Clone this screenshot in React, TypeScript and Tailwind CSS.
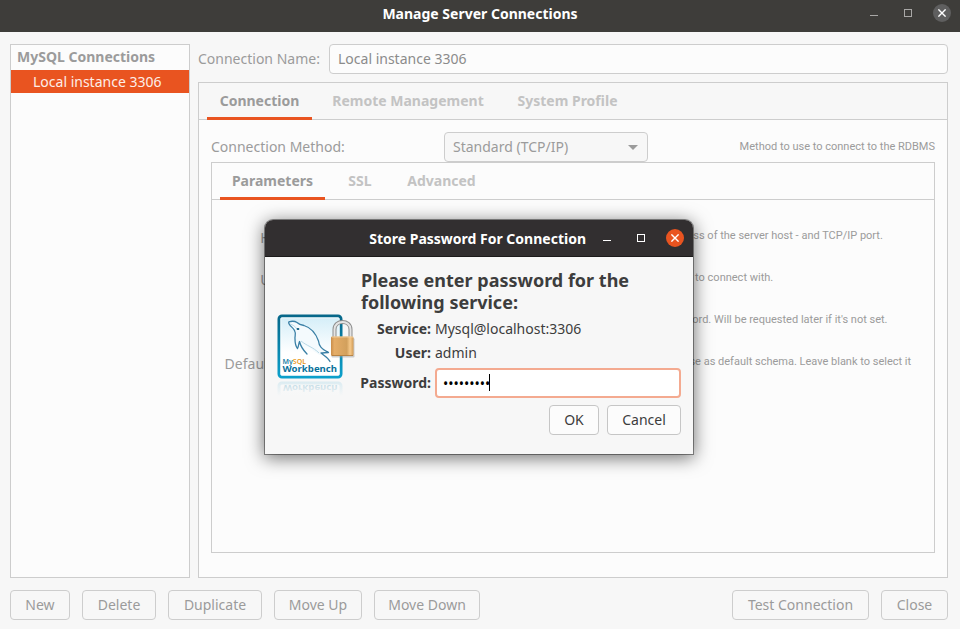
import { useState } from "react";
import type { ReactNode } from "react";

function MinimizeGlyph() {
  return (
    <svg width="8" height="8" viewBox="0 0 8 8" aria-hidden="true">
      <path d="M0 6.5H8" stroke="currentColor" />
    </svg>
  );
}

function MaximizeGlyph() {
  return (
    <svg width="8" height="8" viewBox="0 0 8 8" aria-hidden="true">
      <rect x="0.5" y="0.5" width="7" height="7" fill="none" stroke="currentColor" />
    </svg>
  );
}

function CloseGlyph() {
  return (
    <svg width="8" height="8" viewBox="0 0 8 8" aria-hidden="true">
      <path d="M0.4 0.4L7.6 7.6M7.6 0.4L0.4 7.6" stroke="currentColor" strokeWidth="1.4" />
    </svg>
  );
}

function WindowControls({ active }: { active?: boolean }) {
  const tone = active ? "text-white" : "text-[#a9a8a6]";
  const close = active ? "bg-[#e95420] text-white" : "bg-[#5f5f5f] text-white";
  return (
    <div className={`flex items-center gap-4 pr-[9px] ${tone}`}>
      <button type="button" aria-label="Minimize" className="flex size-[18px] items-center justify-center">
        <MinimizeGlyph />
      </button>
      <button type="button" aria-label="Maximize" className="flex size-[18px] items-center justify-center">
        <MaximizeGlyph />
      </button>
      <button type="button" aria-label="Close" className={`flex size-[18px] items-center justify-center rounded-full ${close}`}>
        <CloseGlyph />
      </button>
    </div>
  );
}

function PushButton({ width, children }: { width: string; children: ReactNode }) {
  return (
    <button
      type="button"
      className={`h-[30px] whitespace-nowrap rounded-[4px] border border-[#cdcdcd] text-center text-[#9b9b9b] ${width}`}
    >
      {children}
    </button>
  );
}

function TabStrip({ tabs, selected }: { tabs: { name: string; width: string }[]; selected: string }) {
  return (
    <div role="tablist" className="flex h-[37px] gap-2 border-b border-[#cdcdcd] px-2 font-bold">
      {tabs.map((tab) => (
        <button
          key={tab.name}
          type="button"
          role="tab"
          aria-selected={tab.name === selected}
          className={`h-[37px] whitespace-nowrap border-b-[3px] pt-px text-center ${tab.width} ${
            tab.name === selected ? "border-[#e95420] text-[#9b9b9b]" : "border-transparent text-[#c3c3c3]"
          }`}
        >
          {tab.name}
        </button>
      ))}
    </div>
  );
}

const fields = [
  { id: "hostname", label: "Hostname:", hint: "Name or IP address of the server host - and TCP/IP port." },
  { id: "username", label: "Username:", hint: "Name of the user to connect with." },
  { id: "password", label: "Password:", hint: "The user's password. Will be requested later if it's not set." },
  { id: "schema", label: "Default Schema:", hint: "The schema to use as default schema. Leave blank to select it" },
];

function WorkbenchLogo() {
  return (
    <svg width="80" height="84" viewBox="0 0 80 84" aria-label="MySQL Workbench" role="img">
      <defs>
        <linearGradient id="frame" x1="0" y1="0" x2="0" y2="1">
          <stop offset="0" stopColor="#07688a" />
          <stop offset="1" stopColor="#0ca0cb" />
        </linearGradient>
        <linearGradient id="sky" x1="0" y1="0" x2="0" y2="1">
          <stop offset="0" stopColor="#d3edf8" />
          <stop offset="0.6" stopColor="#ffffff" />
        </linearGradient>
        <linearGradient id="brass" x1="0" y1="0" x2="1" y2="0">
          <stop offset="0" stopColor="#c98d4a" />
          <stop offset="0.15" stopColor="#e5ad68" />
          <stop offset="0.7" stopColor="#d2a05c" />
          <stop offset="0.85" stopColor="#f6c98a" />
          <stop offset="1" stopColor="#d19a55" />
        </linearGradient>
        <linearGradient id="fade" x1="0" y1="66" x2="0" y2="82" gradientUnits="userSpaceOnUse">
          <stop offset="0" stopColor="#f7f7f7" stopOpacity="0.65" />
          <stop offset="1" stopColor="#f7f7f7" />
        </linearGradient>
      </defs>
      <g transform="translate(0 132) scale(1 -1)">
        <rect x="2" y="2" width="62" height="61" rx="3" fill="#fdfeff" stroke="#9ed3e5" strokeWidth="3" />
        <text x="6" y="61" fontFamily="Noto Sans, sans-serif" fontWeight="700" fontSize="9.6" fill="#2d8fb4">
          Workbench
        </text>
      </g>
      <rect x="0" y="65" width="68" height="19" fill="url(#fade)" />
      <rect x="2" y="2" width="62" height="61" rx="3" fill="url(#sky)" stroke="url(#frame)" strokeWidth="3" />
      <rect x="3.8" y="3.8" width="58.4" height="57.4" rx="1" fill="none" stroke="#fff" strokeWidth="0.8" />
      <path
        fill="#f4fafd"
        d="M11.500 8C14 6.500 17 7 20 8.500C22 10.500 24 11 27 11.500C35 14 39 20 41.500 27C42 32 44 34.500 51 38L45 40L44 41.500C38 39 34 34 30 32L23 28L18 23L17 16Z"
      />
      <g fill="none" stroke="#3b80a6" strokeWidth="1.300" strokeLinejoin="round" strokeLinecap="round">
        <path d="M17.500 16.500C16 13.500 13.500 12.500 12.500 10.500C11 8.500 11.500 7.500 13.500 7.500C16.500 6.800 18.500 7.500 20 8.500C22 10.500 24 11 27 11.500C35 14 39 20 41.500 27C42 32 44 34.500 51.500 38.500C48.500 38.500 46.500 39 44 39C47 41.500 51 43.500 53 47.500" />
        <path d="M17.500 16.500C19.500 20 17.500 22 18 25C18 29 18.500 32 20.500 34.500C22 32 21.500 29 22.500 27.500C23.500 32 25 35 30 40" />
      </g>
      <path d="M13 10C16 11 18 12 20 15M24 27C30 32 36 33 42 39" fill="none" stroke="#a9cfe0" strokeWidth="0.800" />
      <ellipse cx="21" cy="15" rx="1.400" ry="1" fill="#07577c" />
      <text x="5.500" y="49.500" fontFamily="Noto Sans, sans-serif" fontWeight="600" fontSize="7" fill="#2180a6">
        My<tspan fill="#e99a23">SQL</tspan>
      </text>
      <text x="5.500" y="57.500" fontFamily="Noto Sans, sans-serif" fontWeight="700" fontSize="9.600" fill="#0a719b">
        Workbench
      </text>
      <g>
        <path d="M57.500 24V15.500C57.500 5.500 73.500 5.500 73.500 15.500V24" fill="none" stroke="#8e8e8e" strokeWidth="4" />
        <path d="M57.500 24V15.500C57.500 5.500 73.500 5.500 73.500 15.500V24" fill="none" stroke="#e4e4e4" strokeWidth="2" />
        <rect x="54.500" y="24" width="23" height="19.500" rx="1.200" fill="#9f9f9f" opacity="0.5" />
        <rect x="54" y="22.500" width="22.500" height="19.500" rx="1.200" fill="url(#brass)" />
        <path d="M55 23H76" stroke="#f5d6a8" strokeWidth="0.800" />
        <path d="M55 41.500H76" stroke="#ad7a3c" strokeWidth="0.800" />
      </g>
    </svg>
  );
}

function PasswordDialog() {
  const [password, setPassword] = useState("password1");
  return (
    <div className="absolute inset-x-0 top-[220px] flex justify-center pr-0.5">
      <div
        role="dialog"
        aria-labelledby="dialog-title"
        className="w-[428px] rounded-t-[8px] bg-[#f7f7f7] text-[#3d3d3d] shadow-[0_0_0_1px_rgba(0,0,0,0.4),0_3px_18px_1px_rgba(0,0,0,0.55)]"
      >
        <header className="flex h-[37px] items-center justify-end rounded-t-[8px] border-b border-[#1c1b1b] bg-[#322f30]">
          <h2 id="dialog-title" className="mr-3 pt-px font-bold whitespace-nowrap text-white">
            Store Password For Connection
          </h2>
          <WindowControls active />
        </header>
        <form className="flex items-start px-3 pt-3 pb-[19px]" onSubmit={(event) => event.preventDefault()}>
          <div className="w-[84px] shrink-0 pt-[45px]">
            <WorkbenchLogo />
          </div>
          <div className="min-w-0 flex-1">
            <p className="text-[18px] leading-[22px] font-bold">
              Please enter password for the
              <br />
              following service:
            </p>
            <dl className="grid grid-cols-[70px_1fr] gap-x-1 pt-1 leading-6">
              <dt className="text-right font-bold">Service:</dt>
              <dd>Mysql@localhost:3306</dd>
              <dt className="text-right font-bold">User:</dt>
              <dd>admin</dd>
            </dl>
            <div className="grid grid-cols-[70px_1fr] items-center gap-x-1 pt-[3px]">
              <label htmlFor="service-password" className="justify-self-end font-bold">
                Password:
              </label>
              <div className="relative">
                <input
                  id="service-password"
                  type="password"
                  value={password}
                  onChange={(event) => setPassword(event.target.value)}
                  className="block h-[30px] w-full rounded-[4px] border-2 border-[#f4aa90] bg-white px-[6px] text-black caret-transparent outline-none"
                />
                <span className="absolute top-[6px] left-[54px] h-[17px] w-px bg-black" />
              </div>
            </div>
            <div className="flex justify-end gap-2 pt-[7px]">
              <button type="submit" className="h-[30px] w-[50px] rounded-[4px] border border-[#c6c6c6] bg-[#fcfcfc]">
                OK
              </button>
              <button type="button" className="h-[30px] w-[74px] rounded-[4px] border border-[#c6c6c6] bg-[#fcfcfc]">
                Cancel
              </button>
            </div>
          </div>
        </form>
      </div>
    </div>
  );
}

export default function App() {
  const [name, setName] = useState("Local instance 3306");
  return (
    <div className="relative flex min-h-screen flex-col bg-[#f7f7f7] font-['Noto_Sans',sans-serif] text-[14px] leading-5 text-[#9b9b9b]">
      <header className="grid h-8 grid-cols-[1fr_auto_1fr] items-start bg-[#3e3d3a]">
        <h1 className="col-start-2 pt-1 font-bold text-white">Manage Server Connections</h1>
        <div className="justify-self-end pt-1">
          <WindowControls />
        </div>
      </header>

      <main className="flex flex-1 gap-2 pt-3 pr-3 pl-[10px]">
        <nav aria-label="Connections" className="w-[180px] shrink-0 border border-[#cdcdcd] bg-[#fcfcfc]">
          <h2 className="h-[25px] pt-0.5 pl-[6px] font-bold">MySQL Connections</h2>
          <ul>
            <li>
              <button type="button" className="h-[23px] w-full bg-[#e95420] pl-[22px] text-left text-[#fdeee8]">
                Local instance 3306
              </button>
            </li>
          </ul>
        </nav>

        <div className="flex min-w-0 flex-1 flex-col gap-2">
          <div className="flex items-center gap-2">
            <label htmlFor="connection-name" className="w-[123px] whitespace-nowrap">
              Connection Name:
            </label>
            <input
              id="connection-name"
              type="text"
              value={name}
              onChange={(event) => setName(event.target.value)}
              className="h-[30px] min-w-0 flex-1 rounded-[4px] border border-[#cdcdcd] bg-[#fcfcfc] px-2 pb-0.5 text-[#8b8b8b] outline-none"
            />
          </div>

          <section className="flex flex-1 flex-col border border-[#cdcdcd]">
            <TabStrip
              selected="Connection"
              tabs={[
                { name: "Connection", width: "w-[105px]" },
                { name: "Remote Management", width: "w-[176px]" },
                { name: "System Profile", width: "w-[127px]" },
              ]}
            />
            <div className="flex flex-1 flex-col bg-[#fcfcfc] px-3 pt-3 pb-6">
              <div className="flex items-center">
                <label htmlFor="connection-method" className="w-[233px]">
                  Connection Method:
                </label>
                <div className="relative">
                  <select
                    id="connection-method"
                    className="block h-[30px] w-[204px] appearance-none rounded-[4px] border border-[#cdcdcd] bg-[#f7f7f7] px-2 outline-none"
                  >
                    <option>Standard (TCP/IP)</option>
                  </select>
                  <svg className="pointer-events-none absolute top-[13px] right-[10px]" width="10" height="5" viewBox="0 0 10 5" aria-hidden="true">
                    <path d="M0 0H10L5 5Z" fill="#9b9b9b" />
                  </svg>
                </div>
                <p className="ml-auto font-['Roboto',sans-serif] text-[11px]">Method to use to connect to the RDBMS</p>
              </div>

              <section className="flex-1 border border-[#cdcdcd]">
                <TabStrip
                  selected="Parameters"
                  tabs={[
                    { name: "Parameters", width: "w-[105px]" },
                    { name: "SSL", width: "w-[54px]" },
                    { name: "Advanced", width: "w-[93px]" },
                  ]}
                />
                <div className="flex flex-col gap-3 pt-[23px]">
                  {fields.map((field) => (
                    <div key={field.id} className="flex h-[30px] items-center">
                      <label htmlFor={field.id} className="w-[120px] shrink-0 text-right">
                        {field.label}
                      </label>
                      <input
                        id={field.id}
                        type="text"
                        className="ml-2 h-[30px] w-[260px] rounded-[4px] border border-[#cdcdcd] outline-none"
                      />
                      <p className="ml-2 pb-1 font-['Roboto',sans-serif] text-[11px] whitespace-nowrap">{field.hint}</p>
                    </div>
                  ))}
                </div>
              </section>
            </div>
          </section>
        </div>
      </main>

      <footer className="flex gap-3 pt-3 pr-3 pb-[9px] pl-[10px]">
        <PushButton width="w-[60px]">New</PushButton>
        <PushButton width="w-[74px]">Delete</PushButton>
        <PushButton width="w-[94px]">Duplicate</PushButton>
        <PushButton width="w-[88px]">Move Up</PushButton>
        <PushButton width="w-[106px]">Move Down</PushButton>
        <div className="ml-auto flex gap-3">
          <PushButton width="w-[137px]">Test Connection</PushButton>
          <PushButton width="w-[67px]">Close</PushButton>
        </div>
      </footer>

      <PasswordDialog />
    </div>
  );
}
